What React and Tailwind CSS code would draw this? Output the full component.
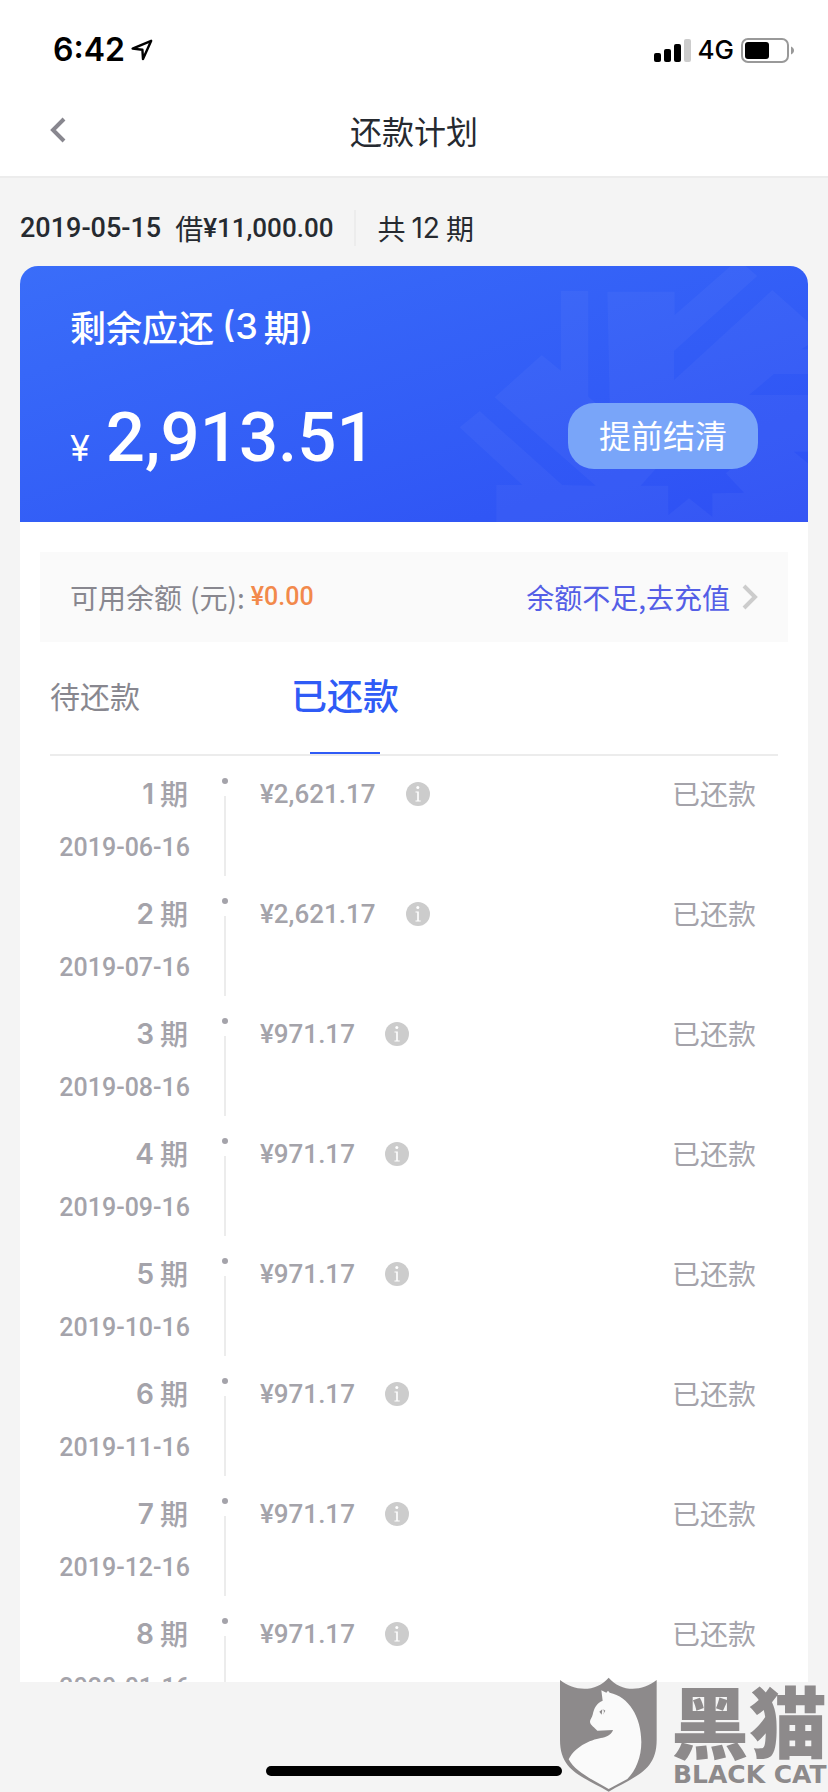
import React, { useState } from "react";

const cjk = "font-['Noto_Sans_CJK_SC',sans-serif]";
const din = "font-['Roboto',sans-serif] font-medium whitespace-nowrap";

const repaid = [
  { term: 1, date: "2019-06-16", amount: "¥2,621.17" },
  { term: 2, date: "2019-07-16", amount: "¥2,621.17" },
  { term: 3, date: "2019-08-16", amount: "¥971.17" },
  { term: 4, date: "2019-09-16", amount: "¥971.17" },
  { term: 5, date: "2019-10-16", amount: "¥971.17" },
  { term: 6, date: "2019-11-16", amount: "¥971.17" },
  { term: 7, date: "2019-12-16", amount: "¥971.17" },
  { term: 8, date: "2020-01-16", amount: "¥971.17" },
];

function StatusBar() {
  return (
    <div className="flex h-[88px] items-center justify-between pt-3 pr-[34px] pl-[53px] font-['Inter',sans-serif] text-black">
      <div className="flex items-center gap-1.5">
        <span className="text-[32px] leading-10 font-semibold">6:42</span>
        <svg className="h-[22px] w-[22px]" viewBox="0 0 22 22" fill="none" stroke="currentColor" strokeWidth="2.4" strokeLinejoin="round" aria-hidden="true">
          <path d="M20.2 1.8 1.6 9.6l9.8 1.1.6 9.4z" />
        </svg>
      </div>
      <div className="flex items-center gap-[7px]">
        <svg className="h-[23px] w-[37px]" viewBox="0 0 37 23" aria-hidden="true">
          <rect x="0" y="14" width="7" height="9" rx="2" />
          <rect x="10" y="10" width="7" height="13" rx="2" />
          <rect x="20" y="5" width="7" height="18" rx="2" />
          <rect x="30" y="0" width="7" height="23" rx="2" fill="#ccc" />
        </svg>
        <span className="text-[26px] leading-10 font-medium">4G</span>
        <svg className="h-[25px] w-[53px]" viewBox="0 0 53 25" aria-hidden="true">
          <rect x="1" y="1" width="46" height="23" rx="6" fill="none" stroke="#999" strokeWidth="2" />
          <rect x="4" y="4" width="24" height="17" rx="3" />
          <path d="M50 8.500c4 1.500 4 6.500 0 8z" fill="#999" />
        </svg>
      </div>
    </div>
  );
}

function CardPattern() {
  return (
    <svg className="absolute top-0 right-0 h-full w-[348px]" viewBox="138 48 1044 768" aria-hidden="true">
      <path
        fill="#fff"
        fillOpacity="0.035"
        fillRule="evenodd"
        d="M383 315 441 362V123H523V440L545 459H587L580 125H782V195L950 48H995L1030 78 780 303V390L1075 120 1182 215V285L1162 298H1182V372H1080L1005 435H1182V605H1140L1182 640V816H247V705H325L137 532 197 483 445 705 545 707 242 442ZM680 707H763V795L825 745 895 800V730L990 728 935 670 950 657H725Z"
      />
    </svg>
  );
}

function InfoIcon() {
  return (
    <svg className="h-6 w-6" viewBox="0 0 24 24" aria-hidden="true">
      <circle cx="12" cy="12" r="12" fill="#ccc" />
      <circle cx="11.800" cy="5.600" r="1.500" fill="#fff" />
      <path d="M9.500 9.500h3.300v9h1.900v1H9.500v-1h1.700v-8H9.500z" fill="#fff" />
    </svg>
  );
}

function Watermark() {
  return (
    <div className="pointer-events-none absolute right-0 bottom-0 flex items-start gap-3 text-[#8d8a8b]">
      <svg className="h-[115px] w-[100px]" viewBox="91 50 300 345" aria-hidden="true">
        <path fill="currentColor" d="M94 59C140 96 205 94 240 52 275 94 338 96 384 59V238C384 330 325 345 240 394 155 345 94 330 94 238Z" />
        <path fill="#fafafa" d="M218 90 233 97 238 91 243 97C300 108 338 170 338 245 338 290 322 330 296 356L240 386C195 360 140 335 120 297 140 255 195 235 222 232 238 229 250 219 253 209L206 211C200 203 184 194 184 184 184 176 190 172 192 163 196 144 204 127 222 121Z" />
        <path fill="currentColor" d="M212 154 221 147 219 163ZM224 147 230 151 223 163 226 155Z" />
      </svg>
      <div className="flex w-[157px] flex-col">
        <span className={`${cjk} text-[78px] leading-[84px] font-black whitespace-nowrap`}>黑猫</span>
        <span className="pl-0.5 font-['DejaVu_Sans',sans-serif] text-[25px] leading-7 font-bold whitespace-nowrap">BLACK CAT</span>
      </div>
    </div>
  );
}

function Installment({ term, date, amount }) {
  return (
    <li className="flex h-[120px] shrink-0 text-[#a4a3aa]">
      <div className="flex w-[140px] flex-col items-end gap-3.5 pt-[18px]">
        <div className="flex h-10 items-center gap-1.5 pr-0.5 font-medium">
          <span className="font-['Inter',sans-serif] text-[28px] leading-10 font-semibold">{term}</span>
          <span className="pb-0.5 text-[28px] leading-9">期</span>
        </div>
        <time dateTime={date} className={`${din} text-[25px] leading-10`}>{date}</time>
      </div>
      <div className="flex w-[70px] flex-col items-center pt-[22px]">
        <span className="h-1.5 w-1.5 rounded-full bg-current" />
        <span className="mt-3 w-0.5 flex-1 bg-[#ececec]" />
      </div>
      <div className="flex flex-1 items-center gap-[30px] self-start pt-[18px]">
        <span className={`${din} text-[26px] leading-10`}>{amount}</span>
        <button type="button" aria-label={`第${term}期明细`}>
          <InfoIcon />
        </button>
      </div>
      <span className="pt-[17px] pr-[22px] text-[28px] leading-10">已还款</span>
    </li>
  );
}

export default function App() {
  const [tab, setTab] = useState("paid");
  return (
    <div className={`relative flex h-screen flex-col overflow-hidden bg-[#f4f4f4] text-[#262a30] ${cjk}`} lang="zh-CN">
      <header className="border-b-2 border-[#ececec] bg-white">
        <StatusBar />
        <div className="grid h-[88px] grid-cols-[1fr_auto_1fr] items-center px-[49px] pb-1">
          <button type="button" aria-label="返回" className="text-[#88878f]">
            <svg className="h-[26px] w-[17px]" viewBox="0 0 17 26" fill="none" stroke="currentColor" strokeWidth="4" aria-hidden="true">
              <path d="M15 2 4 13l11 11" />
            </svg>
          </button>
          <h1 className="text-[32px] leading-10">还款计划</h1>
        </div>
      </header>

      <div className="flex h-[88px] shrink-0 items-center px-5 pt-3 text-[28px] leading-10">
        <span className={`${din} text-[27px]`}>2019-05-15</span>
        <span className="ml-3.5">借</span>
        <span className={`${din} text-[26px]`}>¥11,000.00</span>
        <span className="mx-[21px] h-9 w-0.5 bg-[#ececec]" />
        <span className="flex gap-1.5">
          共<span className="font-['Inter',sans-serif]">12</span>期
        </span>
      </div>

      <main className="mx-5 flex min-h-0 flex-1 flex-col overflow-hidden rounded-t-[18px] bg-white">
        <section className="relative h-64 shrink-0 bg-linear-to-br from-[#3a6df9] to-[#2e4ff4] pt-[34px] pr-[50px] pl-[50px] text-white">
          <CardPattern />
          <h2 className="flex items-center text-[36px] leading-[52px] font-medium">
            剩余应还<span className="ml-2 font-['Inter',sans-serif] text-[36px]">(3</span>
            <span className="ml-1.5">期</span>
            <span className="font-['Inter',sans-serif] text-[36px]">)</span>
          </h2>
          <div className="relative mt-[34px] flex items-center justify-between">
            <p className="flex items-baseline gap-4 pt-1">
              <span className="font-['Inter',sans-serif] text-[36px]">¥</span>
              <span className={`${din} text-[69px] leading-[96px]`}>2,913.51</span>
            </p>
            <button type="button" className="h-[66px] w-[190px] rounded-[26px] bg-[#79a5f9] pb-1 text-[32px] leading-10">
              提前结清
            </button>
          </div>
        </section>

        <section className="mx-5 mt-[30px] flex h-[90px] shrink-0 items-center justify-between bg-[#fafafa] px-[30px] text-[28px] leading-10">
          <p className="flex items-center text-[#88878f]">
            可用余额<span className="ml-2">(元):</span>
            <span className={`${din} ml-1.5 text-[25px] text-[#f2894b]`}>¥0.00</span>
          </p>
          <a href="#recharge" className="flex items-center gap-3 text-[#545ee6]">
            余额不足,去充值
            <svg className="h-[26px] w-4" viewBox="0 0 16 26" fill="none" stroke="#ccc" strokeWidth="4" aria-hidden="true">
              <path d="m2 2 11 11L2 24" />
            </svg>
          </a>
        </section>

        <div role="tablist" className="mx-[30px] flex h-[114px] shrink-0 border-b-2 border-[#ececec]">
          <button
            type="button"
            role="tab"
            aria-selected={tab === "due"}
            onClick={() => setTab("due")}
            className="w-[200px] pb-1.5 text-left text-[30px] leading-10 text-[#88878f]"
          >
            待还款
          </button>
          <button
            type="button"
            role="tab"
            aria-selected={tab === "paid"}
            onClick={() => setTab("paid")}
            className="flex w-[190px] flex-col items-center text-[36px] font-medium text-[#2f5bf6]"
          >
            <span className="flex-1 pt-[26px] leading-[52px]">已还款</span>
            <span className="h-0.5 w-[70px] bg-current" />
          </button>
        </div>

        <ul className="mx-[30px] flex min-h-0 flex-1 flex-col overflow-hidden">
          {repaid.map((row) => (
            <Installment key={row.term} {...row} />
          ))}
        </ul>
      </main>

      <footer className="flex h-[110px] shrink-0 items-end justify-center pb-4">
        <span className="h-2.5 w-[296px] rounded-full bg-black" />
      </footer>
      <Watermark />
    </div>
  );
}
